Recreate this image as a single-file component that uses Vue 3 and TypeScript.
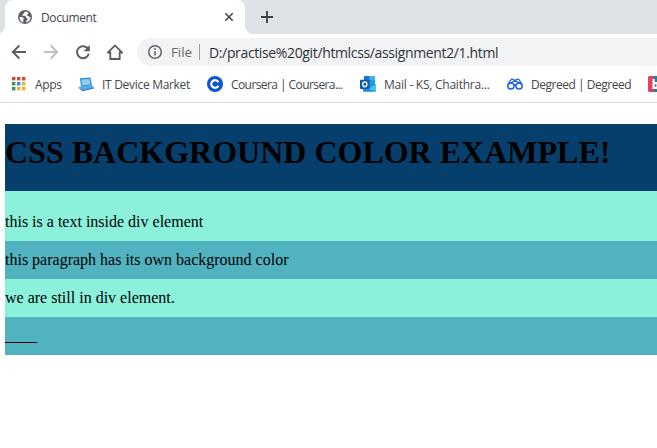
<script setup lang="ts">
interface Bookmark {
  kind: string
  label: string
}

const bookmarks: Bookmark[] = [
  { kind: 'apps', label: 'Apps' },
  { kind: 'device', label: 'IT Device Market' },
  { kind: 'coursera', label: 'Coursera | Coursera...' },
  { kind: 'mail', label: 'Mail - KS, Chaithra...' },
  { kind: 'degreed', label: 'Degreed | Degreed' },
  { kind: 'last', label: '' },
]

const dotColors: string[] = [
  '#d8453b', '#d8453b', '#d8453b',
  '#35935a', '#4285e8', '#e8b52e',
  '#35935a', '#e8b52e', '#e8b52e',
]
</script>

<template>
  <div class="window">
    <header class="tabs">
      <div class="tab">
        <svg class="globe" viewBox="0 0 16 16" width="16" height="16">
          <circle cx="8" cy="8" r="7" fill="#5b5f64" />
          <path d="M8.6 2.4 C6.6 2.8 7.5 4.4 6.2 5 C4.8 5.5 5.2 6.7 6.2 6.8 C8 7 8.8 7 9 8.3 C9.2 9.3 10.8 8.8 10.6 10.2 C10.5 11.4 9 11.6 9 13.4 C11.6 13 13.5 10.8 13.6 8.2 C12.5 8.6 12.3 7.2 11.2 7 C10 6.8 9.6 5.8 10.6 5.2 C11.4 4.8 11.6 4 11 3.2 Z" fill="#fff" />
          <path d="M2.4 8 L5.6 8.3 C6.8 8.6 7 9.6 6.4 10.4 C5.8 11 6.6 12.2 6.3 13.4 C4 12.7 2.4 10.6 2.4 8 Z" fill="#fff" />
        </svg>
        <span class="tab-title">Document</span>
        <svg class="close" viewBox="0 0 10 10" width="10" height="10">
          <path d="M1.3 1.3 L8.7 8.7 M8.7 1.3 L1.3 8.7" stroke="#45494d" stroke-width="1.6" />
        </svg>
      </div>
      <svg class="plus" viewBox="0 0 12 12" width="12" height="12">
        <path d="M6 0 V12 M0 6 H12" stroke="#3c4043" stroke-width="1.8" />
      </svg>
    </header>

    <nav class="toolbar">
      <svg viewBox="0 0 16 16" width="16" height="16">
        <path d="M15 8 H2 M8.3 1.5 L1.8 8 L8.3 14.5" fill="none" stroke="#5a5e63" stroke-width="1.9" />
      </svg>
      <svg viewBox="0 0 16 16" width="16" height="16">
        <path d="M1 8 H14 M7.7 1.5 L14.2 8 L7.7 14.5" fill="none" stroke="#bdbfc2" stroke-width="1.8" />
      </svg>
      <svg viewBox="0 0 16 16" width="16" height="16">
        <path d="M13.2 5.1 A6 6 0 1 0 13.8 9.8" fill="none" stroke="#5a5e63" stroke-width="2" />
        <path d="M14.8 1 V7.2 H8.6 Z" fill="#5a5e63" />
      </svg>
      <svg viewBox="0 0 16 16" width="16" height="16">
        <path d="M0.9 8.5 L8 1.4 L15.1 8.5 H12.7 V15 H3.3 V8.5 Z" fill="none" stroke="#5a5e63" stroke-width="1.8" />
      </svg>
      <div class="address">
        <svg viewBox="0 0 16 16" width="16" height="16">
          <circle cx="8" cy="8" r="6.3" fill="none" stroke="#5f6368" stroke-width="1.5" />
          <path d="M8 7.2 V11.6 M8 4.3 V5.9" stroke="#5f6368" stroke-width="1.6" />
        </svg>
        <span class="scheme">File</span>
        <i class="divider"></i>
        <span class="url">D:/practise%20git/htmlcss/assignment2/1.html</span>
      </div>
    </nav>

    <nav class="bookmarks">
      <div v-for="b in bookmarks" :key="b.kind" class="bookmark" :class="b.kind">
        <svg v-if="b.kind === 'apps'" viewBox="0 0 16 16" width="16" height="16">
          <rect
            v-for="(c, i) in dotColors"
            :key="i"
            :x="1 + (i % 3) * 5"
            :y="1 + Math.floor(i / 3) * 5"
            width="3.4"
            height="3.4"
            :fill="c"
          />
        </svg>
        <svg v-else-if="b.kind === 'device'" viewBox="0 0 16 16" width="16" height="16">
          <path d="M1.8 2.2 L12.4 1.5 L14 9.3 L3.2 10.7 Z" fill="#2f8fce" />
          <path d="M3.2 3.5 L11.4 2.9 L12.5 8.3 L4.3 9.4 Z" fill="#8fcdf2" />
          <path d="M0.2 11.4 L3.2 10.2 L14 9.1 L16 12 L4.5 14.8 Z" fill="#59a9dc" />
          <path d="M0.2 11.4 L4.5 14 L16 11.6 V12.6 L4.5 15.2 Z" fill="#277fbd" />
        </svg>
        <svg v-else-if="b.kind === 'coursera'" viewBox="0 0 16 16" width="16" height="16">
          <circle cx="8" cy="8" r="8" fill="#0a56d0" />
          <path d="M11.4 6.2 A3.8 3.8 0 1 0 11.4 9.8" fill="none" stroke="#fff" stroke-width="2.2" />
        </svg>
        <svg v-else-if="b.kind === 'mail'" viewBox="0 0 16 16" width="16" height="16">
          <rect x="4" y="0" width="11" height="10" fill="#1a78cf" />
          <rect x="9.5" y="0" width="5.5" height="4" fill="#35b4ee" />
          <rect x="9.5" y="4" width="5.5" height="4" fill="#209ae0" />
          <path d="M3 8 H16 V14.8 Q16 15.7 15 15.7 H4 Q3 15.7 3 14.8 Z" fill="#1b91de" />
          <path d="M16 8 L8 13 L16 15.4 Z" fill="#43c1f5" />
          <rect x="0" y="3.7" width="9.5" height="9.3" rx="0.8" fill="#0f5aa9" />
          <ellipse cx="4.8" cy="8.3" rx="2.1" ry="2.4" fill="none" stroke="#fff" stroke-width="1.4" />
        </svg>
        <svg v-else-if="b.kind === 'degreed'" viewBox="0 0 16 16" width="16" height="16">
          <g fill="none" stroke="#1f62ee" stroke-width="1.5">
            <circle cx="3.9" cy="10" r="3.1" />
            <circle cx="12.1" cy="10" r="3.1" />
            <path d="M1 8.6 L10 3.3 Q11.4 2.6 12.3 4 L15 8.6 M15 8.6 L6 3.3 Q4.6 2.6 3.7 4 L1 8.6 M6.9 9.2 Q8 8.2 9.1 9.2" stroke-width="1.3" />
          </g>
        </svg>
        <svg v-else viewBox="0 0 16 16" width="16" height="16">
          <rect width="16" height="16" rx="2" fill="#17849d" />
          <path d="M2 0 H6 V16 H2 Q0 16 0 14 V2 Q0 0 2 0 Z" fill="#e83e61" />
          <path d="M5.6 3 V11.8 H9.5 V7.2 H5.6" fill="none" stroke="#fff" stroke-width="2.2" />
        </svg>
        <span v-if="b.label">{{ b.label }}</span>
      </div>
    </nav>

    <main class="page">
      <h1>CSS BACKGROUND COLOR EXAMPLE!</h1>
      <section>
        <p class="first">this is a text inside div element</p>
        <p class="teal">this paragraph has its own background color</p>
        <p>we are still in div element.</p>
        <p class="teal">____</p>
      </section>
    </main>
  </div>
</template>

<style>
body {
  margin: 0;
  background: #fff;
  overflow: hidden;
}
</style>

<style scoped>
.window {
  width: 657px;
  height: 448px;
  overflow: hidden;
  background: #fff;
  font-family: "Open Sans", "Noto Sans", sans-serif;
  font-size: 12px;
  color: #44474b;
}
svg {
  display: block;
  flex: none;
}
span {
  white-space: nowrap;
}
.tabs {
  display: flex;
  height: 34px;
  padding-left: 5px;
  background: #dee1e6;
}
.tab {
  position: relative;
  display: flex;
  align-items: center;
  box-sizing: border-box;
  width: 240px;
  height: 34px;
  padding: 0 11px 0 12px;
  border-radius: 8px 8px 0 0;
  background: #fff;
}
.tab::before,
.tab::after {
  content: "";
  position: absolute;
  bottom: 0;
  width: 8px;
  height: 8px;
}
.tab::before {
  right: 100%;
  background: radial-gradient(circle at 0 0, transparent 7.5px, #fff 8px);
}
.tab::after {
  left: 100%;
  background: radial-gradient(circle at 100% 0, transparent 7.5px, #fff 8px);
}
.tab-title {
  margin-left: 8px;
  letter-spacing: -0.38px;
}
.close {
  margin-left: auto;
}
.plus {
  margin: 11px 0 0 16px;
}
.toolbar {
  display: flex;
  align-items: center;
  gap: 16px;
  height: 36px;
  padding-left: 11px;
}
.address {
  display: flex;
  align-items: center;
  flex: 1;
  height: 28px;
  margin-left: -2px;
  padding-left: 10px;
  border-radius: 14px 0 0 14px;
  background: #f1f3f4;
  font-size: 14px;
}
.scheme {
  width: 28px;
  margin-left: 8px;
  font-size: 13.5px;
  letter-spacing: -0.1px;
  color: #6b6f73;
}
.divider {
  width: 1px;
  height: 16px;
  margin-right: 9px;
  background: #9b9fa3;
}
.url {
  font-size: 14px;
  letter-spacing: -0.36px;
  color: #303338;
}
.bookmarks {
  display: flex;
  box-sizing: border-box;
  height: 33px;
  padding: 0 0 4px 11px;
  border-bottom: 1px solid #d8dadc;
}
.bookmark {
  display: flex;
  align-items: center;
  flex: none;
  gap: 8px;
}
.apps { width: 67px; }
.device { width: 129px; }
.coursera { width: 153px; }
.mail { width: 147px; }
.degreed { width: 141px; }
.bookmark span { letter-spacing: -0.3px; }
.coursera span { letter-spacing: -0.58px; }
.mail span { letter-spacing: -0.25px; }
.degreed span { letter-spacing: -0.47px; }
.page {
  padding: 21px 0 0 5px;
  font-family: "Liberation Serif", serif;
  font-size: 16px;
  color: #000;
}
h1 {
  box-sizing: border-box;
  height: 67px;
  margin: 0;
  padding-top: 10px;
  background: #073f6c;
  font-size: 32px;
  line-height: 37px;
  white-space: nowrap;
}
section {
  background: #8bf1db;
}
p {
  height: 38px;
  margin: 0;
  line-height: 38px;
}
.first {
  padding-top: 12px;
}
.teal {
  background: #50b3bf;
}
</style>
